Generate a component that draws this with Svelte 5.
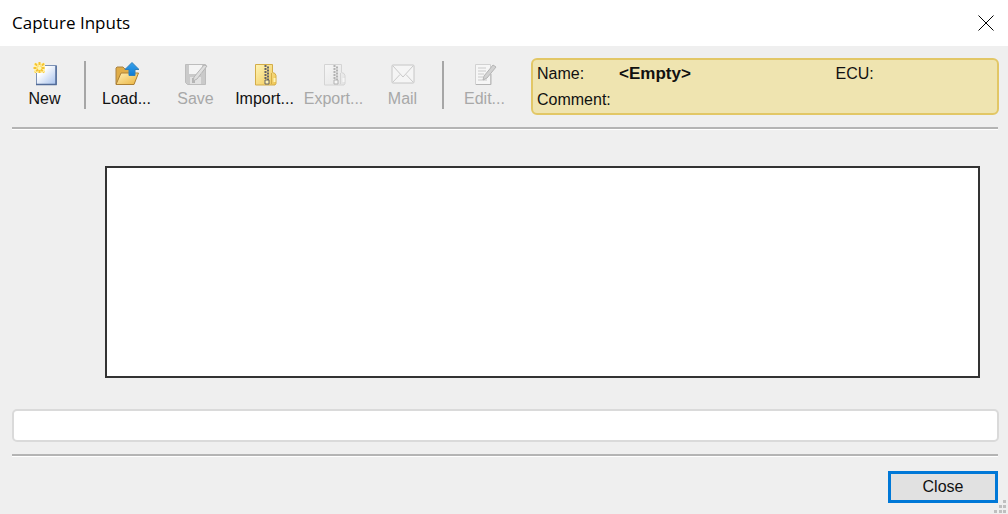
<script lang="ts">
  interface Tool {
    id: string;
    label: string;
    disabled: boolean;
  }

  const groups: Tool[][] = [
    [{ id: "new", label: "New", disabled: false }],
    [
      { id: "load", label: "Load...", disabled: false },
      { id: "save", label: "Save", disabled: true },
      { id: "import", label: "Import...", disabled: false },
      { id: "export", label: "Export...", disabled: true },
      { id: "mail", label: "Mail", disabled: true },
    ],
    [{ id: "edit", label: "Edit...", disabled: true }],
  ];

  let open = $state(true);
  let status = $state("");

  function close() {
    open = false;
  }
</script>

{#snippet archive(id: string, light: string, fill: string, edge: string, zip: string)}
  <defs>
    <linearGradient id="{id}-fill" x1="0" y1="0" x2="1" y2="1">
      <stop offset="0" stop-color={light} />
      <stop offset="1" stop-color={fill} />
    </linearGradient>
  </defs>
  <path d="M2.500 2.500h17v8l2.500 1 1 2v8l-1 1.500H2.500z" fill="url(#{id}-fill)" stroke={edge} />
  <path d="M18.500 11v11" fill="none" stroke={edge} />
  <path d="M21.500 16v4" stroke={light} stroke-width="2" />
  <path d="M12.500 3v15" stroke={zip} stroke-width="2" stroke-dasharray="2 1" />
  <path d="M15 4.500v14" stroke={zip} stroke-width="2" stroke-dasharray="2 1" />
  <path d="M12 18h4v4h-4z" fill={light} stroke={zip} />
{/snippet}

{#snippet icon(id: string)}
  <svg viewBox="0 0 24 24" aria-hidden="true">
    {#if id === "new"}
      <defs>
        <linearGradient id="page" x1="0" y1="0" x2="1" y2="1">
          <stop offset="0.3" stop-color="#fff" />
          <stop offset="1" stop-color="#a3bfec" />
        </linearGradient>
      </defs>
      <path d="M3.500 3.500h20v19h-20z" fill="url(#page)" stroke="#7b91b5" />
      <path d="M23 4v18.500H3" fill="none" stroke="#526b98" stroke-width="1.500" />
      <path d="M1 1h11v10H1z" fill="#fff3b5" />
      <path d="M6.500 0v12M.5 6h12M2 1.500l9 9M11 1.500l-9 9" stroke="#f5c432" stroke-width="2" stroke-dasharray="3 1" />
      <circle cx="6.500" cy="6" r="2" fill="#fff6b2" />
    {:else if id === "load"}
      <defs>
        <linearGradient id="folder" x1="0" y1="0" x2="1" y2="1">
          <stop offset="0" stop-color="#fff0b5" />
          <stop offset="1" stop-color="#ebb33e" />
        </linearGradient>
        <linearGradient id="arrow" x1="0" y1="0" x2="0" y2="1">
          <stop offset="0" stop-color="#39a2ec" />
          <stop offset="1" stop-color="#0c7bd5" />
        </linearGradient>
      </defs>
      <path d="M1 22V6l1-1h6l2 2h9v14z" fill="#e0ad48" stroke="#a98243" />
      <path d="M1 22.500L6 11h17.500L19 22.500z" fill="url(#folder)" stroke="#ad8034" />
      <path d="M17 .5l7 7h-4v6h-6v-6h-4z" fill="url(#arrow)" stroke="#3180bb" />
    {:else if id === "save"}
      <path d="M1.500 2.500h20v20h-18l-2-2z" fill="#cacaca" stroke="#bdbdbd" />
      <path d="M5 3h13v9H5z" fill="#f4f4f4" />
      <path d="M6 15h11v7H6z" fill="#e2e2e2" />
      <path d="M8 16h3v5H8z" fill="#b5b5b5" />
      <path d="M23 4L13 17l-4 2 1-4L20 3z" fill="#dedede" stroke="#b5b5b5" />
    {:else if id === "import"}
      {@render archive(id, "#fff4b5", "#efc654", "#d4ad48", "#626267")}
    {:else if id === "export"}
      {@render archive(id, "#f6f6f6", "#e3e3e3", "#d4d4d4", "#b2b2b2")}
    {:else if id === "mail"}
      <rect x="1" y="3" width="22" height="18" rx="1" fill="#f5f5f5" stroke="#c6c6c6" />
      <path d="M2 20l7-7.500M22 20l-7-7.500M2 4l10 11L22 4" fill="none" stroke="#cacaca" />
    {:else if id === "edit"}
      <path d="M2.500 2.500h15v20h-15z" fill="#f6f6f6" stroke="#d2d2d2" />
      <path d="M18 12v10.500H3" fill="none" stroke="#b5b5b5" />
      <path d="M5 6h8M5 9h8M5 12h6M5 15h5M5 18h9" stroke="#cacaca" />
      <path d="M20 3l3 2-9 11-4 2 1-4z" fill="#d2d2d2" stroke="#b5b5b5" />
    {/if}
  </svg>
{/snippet}

{#if open}
  <div class="dialog" role="dialog" aria-labelledby="title">
    <header>
      <h1 id="title">Capture Inputs</h1>
      <button class="dismiss" aria-label="Close window" onclick={close}>
        <svg viewBox="0 0 16 16" aria-hidden="true">
          <path d="M.5 .5l15 15M15.500 .5l-15 15" stroke="#000" />
        </svg>
      </button>
    </header>

    <div class="top">
      <div class="toolbar" role="toolbar" aria-label="Capture">
        {#each groups as group, i}
          {#if i > 0}<span class="separator"></span>{/if}
          {#each group as tool (tool.id)}
            <button class="tool" disabled={tool.disabled}>
              {@render icon(tool.id)}
              <span>{tool.label}</span>
            </button>
          {/each}
        {/each}
      </div>
      <dl class="info">
        <dt>Name:</dt>
        <dd><strong>&lt;Empty&gt;</strong></dd>
        <dt>ECU:</dt>
        <dd></dd>
        <dt>Comment:</dt>
        <dd></dd>
      </dl>
    </div>

    <hr />
    <main></main>
    <input class="status" type="text" aria-label="Status" readonly bind:value={status} />
    <hr />

    <footer>
      <button class="close" onclick={close}>Close</button>
    </footer>
    <svg class="grip" viewBox="0 0 14 14" aria-hidden="true">
      <path d="M9 0h3v3H9zM5 5h3v3H5zM9 5h3v3H9zM0 10h3v3H0zM5 10h3v3H5zM9 10h3v3H9z" fill="#bfbfbf" />
    </svg>
  </div>
{/if}

<style>
  :global(body) {
    margin: 0;
  }
  .dialog {
    position: relative;
    box-sizing: border-box;
    min-height: 100vh;
    display: flex;
    flex-direction: column;
    background: #efefef;
    color: #111;
    font: 16px/20px "Liberation Sans", Arial, sans-serif;
  }
  button {
    font: inherit;
    color: inherit;
    padding: 0;
  }
  header {
    display: flex;
    align-items: center;
    justify-content: space-between;
    height: 46px;
    padding: 0 12px;
    background: #fff;
  }
  h1 {
    margin: 0;
    font: 17px/24px "Segoe UI", "Open Sans", sans-serif;
    color: #000;
  }
  .dismiss {
    display: flex;
    padding: 2px;
    border: 0;
    background: none;
  }
  .dismiss svg {
    width: 16px;
    height: 16px;
  }
  .top {
    display: flex;
    gap: 12px;
    padding: 12px 9px 12px 10px;
  }
  .toolbar {
    display: flex;
    align-items: flex-start;
  }
  .tool {
    display: flex;
    flex-direction: column;
    align-items: center;
    width: 69px;
    padding-top: 4px;
    gap: 3px;
    border: 0;
    background: none;
    white-space: nowrap;
  }
  .tool:disabled {
    color: #a8a8a8;
  }
  .tool svg {
    width: 24px;
    height: 24px;
  }
  .separator {
    width: 2px;
    height: 48px;
    margin: 3px 6px 0 5px;
    background: #a6a6a6;
  }
  .info {
    flex: 1;
    box-sizing: border-box;
    display: grid;
    grid-template-columns: 82px 11fr 2fr 6fr;
    align-content: center;
    row-gap: 6px;
    min-height: 57px;
    margin: 0;
    padding: 0 4px;
    border: 2px solid #e2c766;
    border-radius: 6px;
    background: #efe4b0;
  }
  dd {
    margin: 0;
  }
  strong {
    font-size: 17px;
  }
  hr {
    height: 2px;
    margin: 0 10px 0 12px;
    border: 0;
    border-bottom: 1px solid #fff;
    background: #b4b4b4;
  }
  main {
    flex: 1;
    margin: 36px 28px 31px 105px;
    border: 2px solid #333;
    background: #fff;
  }
  .status {
    box-sizing: border-box;
    height: 33px;
    margin: 0 9px 12px 12px;
    padding: 0 8px;
    border: 2px solid #dadada;
    border-radius: 5px;
    background: #fff;
    font: inherit;
  }
  footer {
    display: flex;
    justify-content: flex-end;
    padding: 14px 10px 11px;
  }
  .close {
    width: 110px;
    height: 32px;
    border: 3px solid #0078d7;
    background: #e1e1e1;
  }
  .grip {
    position: absolute;
    right: 0;
    bottom: 0;
    width: 14px;
    height: 14px;
  }
</style>
